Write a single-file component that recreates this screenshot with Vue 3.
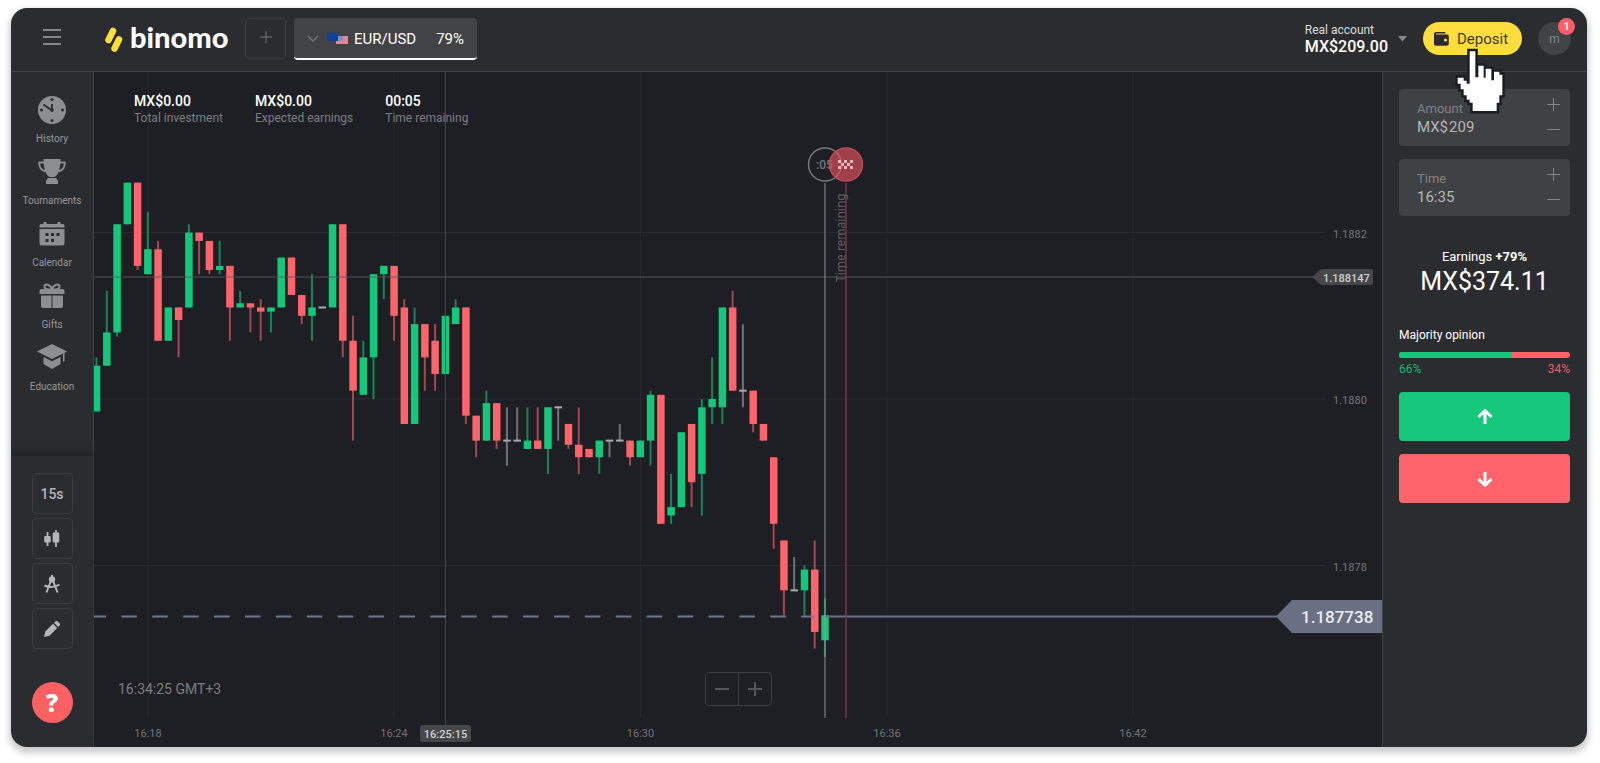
<template>
  <div class="window">
    <header class="topbar">
      <div class="topbar-left">
        <button type="button" class="burger" aria-label="Menu">
          <span></span><span></span><span></span>
        </button>
        <a href="#" class="logo">
          <svg width="18" height="26" viewBox="0 0 18 26" aria-hidden="true">
            <g stroke="#ffdd3c" stroke-width="6.500" stroke-linecap="round">
              <path d="M3.500 14 8 5M9.500 22.500 14 13.500" />
            </g>
          </svg>
          <span>binomo</span>
        </a>
        <button type="button" class="add-tab" aria-label="Add asset">
          <svg width="14" height="14" viewBox="0 0 14 14" aria-hidden="true">
            <path d="M7 1v12M1 7h12" stroke="#727376" />
          </svg>
        </button>
        <button type="button" class="asset-tab">
          <svg width="12" height="8" viewBox="0 0 12 8" aria-hidden="true">
            <path d="M1 1l5 5 5-5" fill="none" stroke="#77787b" stroke-width="1.3" />
          </svg>
          <svg class="flags" width="22" height="12" viewBox="0 0 22 12" aria-hidden="true">
            <rect x="9" y="3" width="12" height="8" fill="#e08a92" />
            <rect x="9" y="3" width="7" height="5" fill="#8090bd" />
            <rect width="11" height="8" fill="#10429a" />
          </svg>
          <span class="asset-name">EUR/USD</span>
          <span>79%</span>
        </button>
      </div>
      <div class="topbar-right">
        <button type="button" class="account">
          <span>
            <span class="account-type">Real account</span>
            <span class="account-balance">MX$209.00</span>
          </span>
          <svg width="9" height="6" viewBox="0 0 9 6" aria-hidden="true">
            <path d="M0 0h9L4.500 5.500z" fill="#87888b" />
          </svg>
        </button>
        <div class="deposit-wrap">
          <button type="button" class="deposit">
            <svg width="15" height="14" viewBox="0 0 15 14" aria-hidden="true">
              <path
                d="M2 0h8.500a1 1 0 0 1 1 1v.6H2.200v.9H13a1.800 1.800 0 0 1 1.800 1.800V12a1.800 1.800 0 0 1-1.800 1.800H2A2 2 0 0 1 0 11.800V2a2 2 0 0 1 2-2z"
                fill="#2c2c2e"
              />
              <circle cx="11.500" cy="8" r="1.600" fill="#ffdd3c" />
            </svg>
            Deposit
          </button>
          <svg class="pointer" width="52" height="68" viewBox="102 95 156 204" aria-hidden="true">
            <path
              d="M149 108H166V186H175V151H191V187H197V160H214V195H222V169H238V178H247V240H238V262H230V287H158V262H149V253H140V240H131V222H122V205H113V187H131V196H140V205H149Z"
              fill="#fff"
              stroke="#1b1d24"
              stroke-width="15"
              paint-order="stroke"
            />
          </svg>
        </div>
        <button type="button" class="avatar">m<span class="badge">1</span></button>
      </div>
    </header>

    <div class="main">
      <aside class="sidebar">
        <nav class="menu">
          <a v-for="item in menu" :key="item.label" href="#" class="menu-item">
            <svg width="32" height="28" viewBox="0 0 32 28" aria-hidden="true">
              <g v-if="item.icon === 'clock'">
                <circle cx="16" cy="14" r="14" fill="#8d8e91" />
                <path d="M16 8v6.500L7.500 8.500" fill="none" stroke="#2b2c30" stroke-width="1.800" />
                <g fill="#2b2c30">
                  <circle cx="16" cy="14" r="1.800" />
                  <circle cx="16" cy="3.500" r="1.500" />
                  <circle cx="16" cy="24.500" r="1.500" />
                  <circle cx="5.500" cy="14" r="1.500" />
                  <circle cx="26.500" cy="14" r="1.500" />
                </g>
              </g>
              <g v-else-if="item.icon === 'cup'">
                <path d="M7.500 1h17c0 9-2 16-6 18h-5c-4-2-6-9-6-18z" fill="#8d8e91" />
                <path
                  d="M8 4.500H3.200c0 5 2 8 6.300 9M24 4.500h4.800c0 5-2 8-6.300 9"
                  fill="none"
                  stroke="#8d8e91"
                  stroke-width="1.800"
                />
                <path d="M12 20h8l2 3v3H10v-3z" fill="#8d8e91" />
              </g>
              <g v-else-if="item.icon === 'calendar'" fill="#8d8e91">
                <path d="M5 4h2.500V2h3v2h11V2h3v2H27q1.500 0 1.500 2v1.500h-25V6Q3.500 4 5 4z" />
                <path
                  fill-rule="evenodd"
                  d="M3.500 9h25v14.500q0 2-2 2h-21q-2 0-2-2zM15 13v3h3v-3zM20.500 13v3h3v-3zM9.500 13v3h3v-3zM9.500 19v3h3v-3zM15 19v3h3v-3z"
                />
              </g>
              <g v-else-if="item.icon === 'gift'" fill="#8d8e91">
                <path d="M3.500 9q0-2 2-2h21q2 0 2 2v3h-25zM5 13.500h10.500V26H7q-2 0-2-2zM16.500 13.500H27V24q0 2-2 2h-8.500z" />
                <path
                  d="M16 7.500C9 7.500 8 6 8.500 4s5.500-2.500 7.500 3.500c2-6 7-5.500 7.500-3.500s-.5 3.500-7.500 3.500z"
                  fill="none"
                  stroke="#8d8e91"
                  stroke-width="2"
                />
              </g>
              <g v-else fill="#8d8e91">
                <path d="M16 0l15 7.500L16 15 1 7.500z" />
                <path d="M7.500 13l8.500 4.200 8.500-4.200v7L16 25l-8.500-5z" />
                <path d="M27 9l1.500-1v9.500H27z" />
              </g>
            </svg>
            <span>{{ item.label }}</span>
          </a>
        </nav>
        <div class="tools">
          <button type="button" class="tool">15s</button>
          <button type="button" class="tool" aria-label="Chart type">
            <svg width="18" height="18" viewBox="0 0 18 18" aria-hidden="true">
              <path d="M4.500 2v14M13 0v17" stroke="#b4b5b7" stroke-width="1.800" />
              <rect x="1.200" y="6" width="6.500" height="6.500" rx="1" fill="#b4b5b7" />
              <rect x="9.700" y="2.500" width="6.500" height="10" rx="1" fill="#b4b5b7" />
            </svg>
          </button>
          <button type="button" class="tool" aria-label="Indicators">
            <svg width="18" height="18" viewBox="0 0 18 18" aria-hidden="true">
              <circle cx="9" cy="4.500" r="3.200" fill="#b4b5b7" />
              <path
                d="M9 0v3M7.500 7L5.500 12 3.500 17.500M10.500 7l2 5 2 5.500M1.500 10.500q7.500 3.500 15-1"
                fill="none"
                stroke="#b4b5b7"
                stroke-width="2"
              />
            </svg>
          </button>
          <button type="button" class="tool" aria-label="Drawing">
            <svg width="18" height="18" viewBox="0 0 18 18" aria-hidden="true">
              <path d="M1 17l1.300-5.500 7.700-7.700 4.200 4.200-7.700 7.700z" fill="#b4b5b7" />
              <path d="M11 2.800l1.600-1.500q1-.8 2 0l2.100 2.100q.8 1 0 2L15.200 7z" fill="#b4b5b7" />
            </svg>
          </button>
          <button type="button" class="help" aria-label="Help">?</button>
        </div>
      </aside>

      <section class="chart">
        <svg class="plot" viewBox="0 0 1288 675" preserveAspectRatio="xMaxYMid meet">
          <g stroke="#292a2d">
            <path v-for="t in timeLabels" :key="t.text" :d="`M${t.x} 0V646`" />
            <path v-for="p in priceLabels" :key="p.text" :d="`M0 ${p.y}H1232`" />
          </g>
          <g v-for="(c, i) in candles" :key="i" :fill="c.color">
            <rect :x="c.x - 1" :y="c.high" width="2" :height="c.low - c.high" opacity="0.6" />
            <rect :x="c.x - 3.700" :y="c.top" width="7.500" :height="c.height" />
          </g>

          <path d="M0 205H1222" stroke="#55575b" stroke-opacity="0.6" stroke-width="1.500" />
          <path d="M351.500 0V654" stroke="#47484b" />

          <path d="M-3.500 544.500H720" stroke="#6f7690" stroke-width="2" stroke-dasharray="15.500 15.400" />
          <path d="M731 544.500H1184" stroke="#6a708a" stroke-width="2" />
          <path d="M1182 544.500L1198 528H1288V561H1198z" fill="#697083" />
          <text x="1207" y="551" class="price-now">1.187738</text>

          <path d="M731 111V646" stroke="#9a9b9f" stroke-opacity="0.45" stroke-width="2" />
          <path d="M752 111V646" stroke="#753b43" stroke-width="1.500" />
          <text class="rotated" transform="translate(751 210) rotate(-90)">Time remaining</text>
          <circle cx="731" cy="92.500" r="16.500" fill="none" stroke="#77787b" stroke-width="1.500" />
          <text x="722" y="97" class="countdown">:05</text>
          <circle
            cx="752"
            cy="92.500"
            r="16.500"
            fill="#e5525d"
            fill-opacity="0.65"
            stroke="#bd4c56"
            stroke-width="1.500"
          />
          <g fill="#e6b4b8">
            <rect v-for="(s, i) in flagSquares" :key="i" :x="744 + s[0] * 3" :y="88 + s[1] * 3" width="3" height="3" />
          </g>

          <g class="axis">
            <text v-for="t in timeLabels" :key="t.text" :x="t.x" y="665" text-anchor="middle">
              {{ t.text }}
            </text>
            <text v-for="p in priceLabels" :key="p.text" x="1239" :y="p.y + 5">{{ p.text }}</text>
          </g>
          <rect x="326" y="653" width="51" height="17" rx="3" fill="#46474a" />
          <text x="351.500" y="666" text-anchor="middle" class="marker">16:25:15</text>
          <path d="M1218 205L1227 197H1277q2 0 2 2V211q0 2-2 2H1227z" fill="#46474a" />
          <text x="1229" y="210" class="marker">1.188147</text>
        </svg>

        <div class="overlay">
          <dl class="stats">
            <div v-for="s in stats" :key="s.label">
              <dd>{{ s.value }}</dd>
              <dt>{{ s.label }}</dt>
            </div>
          </dl>
          <div class="chart-footer">
            <time class="clock">16:34:25 GMT+3</time>
            <div class="zoom">
              <button type="button" aria-label="Zoom out">
                <svg width="14" height="14" viewBox="0 0 14 14" aria-hidden="true">
                  <path d="M0 7h14" stroke="#55565a" stroke-width="2" />
                </svg>
              </button>
              <button type="button" aria-label="Zoom in">
                <svg width="14" height="14" viewBox="0 0 14 14" aria-hidden="true">
                  <path d="M0 7h14M7 0v14" stroke="#55565a" stroke-width="2" />
                </svg>
              </button>
            </div>
          </div>
        </div>
      </section>

      <aside class="deal">
        <div class="field">
          <div class="field-text">
            <label for="amount">Amount</label>
            <div class="field-value">MX$<input id="amount" v-model="amount" type="text" /></div>
          </div>
          <div class="stepper">
            <button type="button" class="plus" aria-label="Increase amount"></button>
            <button type="button" aria-label="Decrease amount"></button>
          </div>
        </div>
        <div class="field">
          <div class="field-text">
            <label for="time">Time</label>
            <div class="field-value"><input id="time" v-model="time" type="text" /></div>
          </div>
          <div class="stepper">
            <button type="button" class="plus" aria-label="Later"></button>
            <button type="button" aria-label="Earlier"></button>
          </div>
        </div>
        <div class="earnings">
          <div>Earnings <b>+79%</b></div>
          <div class="earnings-sum">MX$374.11</div>
        </div>
        <div class="majority">
          <div class="majority-title">Majority opinion</div>
          <div class="majority-bar"><div :style="{ width: majority + '%' }"></div></div>
          <div class="majority-values">
            <span class="up">{{ majority }}%</span>
            <span class="down">{{ 100 - majority }}%</span>
          </div>
        </div>
        <button type="button" class="trade trade-up" aria-label="Up">
          <svg width="16" height="16" viewBox="0 0 16 16" aria-hidden="true">
            <path d="M8 15V2M1.500 8L8 1.500 14.500 8" />
          </svg>
        </button>
        <button type="button" class="trade trade-down" aria-label="Down">
          <svg width="16" height="16" viewBox="0 0 16 16" aria-hidden="true">
            <path d="M8 1v13M1.500 8L8 14.500 14.500 8" />
          </svg>
        </button>
      </aside>
    </div>
  </div>
</template>

<script setup>
import { ref, computed } from "vue";

const amount = ref("209");
const time = ref("16:35");
const majority = ref(66);

const menu = [
  { label: "History", icon: "clock" },
  { label: "Tournaments", icon: "cup" },
  { label: "Calendar", icon: "calendar" },
  { label: "Gifts", icon: "gift" },
  { label: "Education", icon: "cap" },
];

const stats = [
  { value: "MX$0.00", label: "Total investment" },
  { value: "MX$0.00", label: "Expected earnings" },
  { value: "00:05", label: "Time remaining" },
];

const timeLabels = [
  { text: "16:18", x: 54 },
  { text: "16:24", x: 300 },
  { text: "16:30", x: 546.5 },
  { text: "16:36", x: 793 },
  { text: "16:42", x: 1039 },
];

const priceLabels = [
  { text: "1.1882", y: 160.5 },
  { text: "1.1880", y: 327 },
  { text: "1.1878", y: 493.5 },
];

const flagSquares = [
  [0, 0], [2, 0], [4, 0], [1, 1], [3, 1], [0, 2], [2, 2], [4, 2],
];

// open, high, low, close in steps of 0.000005 counted from 1.1880
const quotes = [
  [-3, 10, -3, 8], [8, 26, 8, 16], [16, 42, 15, 42], [42, 52, 42, 52],
  [52, 52, 31, 32], [30, 45, 30, 36], [36, 38, 14, 14], [14, 22, 14, 22],
  [22, 22, 10, 19], [22, 42, 22, 40], [40, 40, 30, 38], [38, 38, 30, 31],
  [31, 38, 30, 32], [32, 32, 14, 22], [22, 26, 22, 23], [23, 23, 16, 22],
  [22, 24, 14, 21], [21, 22, 16, 22], [22, 34, 22, 34], [34, 34, 25, 25],
  [25, 25, 18, 20], [20, 30, 14, 22], [22, 22, 22, 22], [22, 42, 22, 42],
  [42, 42, 10, 14], [14, 20, -10, 2], [1, 14, 1, 10], [10, 30, 0, 30],
  [30, 32, 24, 32], [32, 32, 14, 20], [22, 24, -6, -6], [-6, 22, -6, 18],
  [18, 18, 2, 10], [14, 18, 2, 6], [6, 20, 6, 20], [18, 24, 18, 22],
  [22, 22, -6, -4], [-4, -4, -14, -10], [-10, 2, -10, -1], [-1, -1, -12, -10],
  [-10, -2, -16, -10], [-10, -2, -10, -10], [-12, -2, -12, -10], [-10, -2, -12, -12],
  [-12, -2, -18, -2], [-2, -2, -10, -2], [-6, -6, -12, -11], [-11, -2, -18, -14],
  [-12, -12, -14, -14], [-14, -10, -18, -10], [-10, -10, -14, -10], [-10, -6, -10, -10],
  [-10, -10, -16, -14], [-14, -10, -14, -10], [-10, 2, -16, 1], [1, 1, -30, -30],
  [-28, -18, -30, -26], [-26, -8, -26, -8], [-6, -6, -26, -20], [-18, 0, -28, -2],
  [-2, 10, -6, 0], [-2, 22, -6, 22], [22, 26, 2, 2], [2, 18, -2, 2],
  [2, 2, -8, -6], [-6, -6, -10, -10], [-14, -14, -36, -30], [-34, -34, -52, -46],
  [-46, -38, -46, -46], [-46, -40, -52, -41], [-41, -34, -60, -56], [-58, -48, -62, -52],
];

const toY = (value) => 327 - value * 4.16;

const candles = computed(() =>
  quotes.map(([open, high, low, close], i) => {
    const flat = open === close;
    const top = toY(Math.max(open, close));
    return {
      x: 2.5 + i * 10.26,
      high: toY(high),
      low: toY(low),
      top: flat ? top - 1 : top,
      height: flat ? 2 : Math.abs(open - close) * 4.16,
      color: flat ? "#a9aaad" : close > open ? "#15c77b" : "#ff636c",
    };
  })
);
</script>

<style>
body {
  background-color: #fff;
}
</style>

<style scoped>
* {
  box-sizing: border-box;
}
.window {
  display: flex;
  flex-direction: column;
  min-height: calc(100vh - 24px);
  margin: 8px 13px 16px 11px;
  border-radius: 16px;
  overflow: hidden;
  background-color: #2b2c30;
  box-shadow: 0 4px 6px 2px rgba(0, 0, 0, 0.2);
  color: #fff;
  font-family: Roboto, "Liberation Sans", sans-serif;
  font-size: 13px;
  line-height: 16px;
}
button {
  display: flex;
  align-items: center;
  justify-content: center;
  padding: 0;
  border: 0;
  background: none;
  color: inherit;
  font: inherit;
  cursor: pointer;
}
a {
  color: inherit;
  text-decoration: none;
}

/* top bar */
.topbar {
  display: flex;
  justify-content: space-between;
  height: 64px;
  padding-bottom: 2px;
  border-bottom: 1px solid #424347;
}
.topbar-left,
.topbar-right {
  display: flex;
  align-items: center;
}
.topbar-left {
  padding-left: 32px;
}
.topbar-right {
  padding-right: 16px;
}
.burger {
  flex-direction: column;
  gap: 5px;
  padding-bottom: 4px;
}
.burger span {
  width: 18px;
  height: 2px;
  background-color: #85868a;
}
.logo {
  display: flex;
  align-items: center;
  gap: 7px;
  width: 127px;
  margin: 0 13px 0 44px;
  font-family: Lato, "Open Sans", sans-serif;
  font-size: 29px;
  font-weight: 900;
  line-height: 32px;
}
.logo svg {
  flex: none;
}
.logo span {
  padding-bottom: 4px;
}
.add-tab {
  width: 41px;
  height: 41px;
  margin-right: 8px;
  border: 1px solid #3b3c40;
  border-radius: 4px;
}
.add-tab svg {
  margin-bottom: 4px;
}
.asset-tab {
  justify-content: flex-start;
  width: 183px;
  height: 42px;
  padding: 3px 13px 0;
  border-bottom: 2px solid #fff;
  border-radius: 4px;
  background-color: #424346;
  font-size: 15px;
}
.flags {
  margin: 0 5px 0 8px;
}
.asset-name {
  flex: 1;
  text-align: left;
}
.account {
  gap: 10px;
  margin-right: 16px;
  text-align: left;
}
.account > span > span {
  display: block;
}
.account-type {
  color: #dcdcdd;
  font-size: 12px;
}
.account-balance {
  font-size: 16px;
  font-weight: 500;
  line-height: 18px;
}
.deposit-wrap {
  position: relative;
  margin-right: 16px;
}
.deposit {
  justify-content: flex-start;
  gap: 8px;
  width: 99px;
  height: 33px;
  padding-left: 11px;
  border-radius: 17px;
  background-color: #ffdd3c;
  color: #3d3a2c;
  font-size: 15px;
}
.pointer {
  position: absolute;
  top: 25px;
  left: 31px;
  z-index: 2;
}
.avatar {
  position: relative;
  width: 33px;
  height: 33px;
  border-radius: 50%;
  background-color: #424347;
  color: #86878a;
  font-size: 12px;
}
.badge {
  position: absolute;
  top: -4px;
  right: -4px;
  width: 17px;
  height: 17px;
  border-radius: 50%;
  background-color: #ff5f68;
  color: #fff;
  font-size: 10px;
  font-weight: 700;
  line-height: 17px;
}

/* body */
.main {
  display: grid;
  flex: 1;
  grid-template-columns: 83px minmax(0, 1fr) 205px;
}
.sidebar {
  display: flex;
  flex-direction: column;
  border-right: 1px solid #424347;
}
.menu {
  display: flex;
  flex: 1;
  flex-direction: column;
  gap: 11px;
  padding-top: 24px;
}
.menu-item {
  display: flex;
  flex-direction: column;
  align-items: center;
  gap: 7px;
  color: #97989b;
  font-size: 10px;
}
.tools {
  display: flex;
  flex-direction: column;
  align-items: center;
  gap: 4px;
  padding: 17px 0 24px;
  box-shadow: 0 -4px 8px #202125;
}
.tool {
  width: 41px;
  height: 41px;
  border: 1px solid #3b3c40;
  border-radius: 4px;
  color: #b4b5b7;
  font-size: 14px;
  font-weight: 500;
}
.help {
  width: 41px;
  height: 41px;
  margin-top: 29px;
  border-radius: 50%;
  background-color: #fb6163;
  font-family: "Open Sans", sans-serif;
  font-size: 24px;
  font-weight: 800;
}

/* chart */
.chart {
  display: grid;
  background-color: #1e1f24;
}
.plot,
.overlay {
  grid-area: 1 / 1;
  width: 100%;
  height: 100%;
  min-height: 0;
}
.plot text {
  font-family: Roboto, "Liberation Sans", sans-serif;
}
.axis {
  fill: #737477;
  font-size: 11px;
}
.plot .marker {
  fill: #d2d2d3;
  font-size: 11px;
  font-weight: 500;
}
.plot .price-now {
  fill: #ececee;
  font-size: 17px;
  font-weight: 500;
}
.plot .rotated {
  fill: #5e5f62;
  font-family: "Noto Sans", sans-serif;
  font-size: 12px;
}
.plot .countdown {
  fill: #77787b;
  font-size: 12px;
  font-weight: 500;
}
.overlay {
  display: flex;
  flex-direction: column;
  justify-content: space-between;
  padding: 21px 24px 41px;
}
.stats {
  display: flex;
  gap: 32px;
  margin: 0;
  padding-left: 16px;
}
.stats dd {
  margin: 0;
  font-size: 14px;
  font-weight: 500;
}
.stats dt {
  color: #7c7d80;
  font-size: 12px;
  line-height: 18px;
}
.chart-footer {
  display: grid;
  grid-template-columns: 1fr auto 1fr;
  align-items: center;
}
.clock {
  color: #7c7d80;
  font-size: 14px;
}
.zoom {
  display: flex;
  height: 34px;
  border: 1px solid #3c3d40;
  border-radius: 4px;
}
.zoom button {
  width: 32px;
}
.zoom button + button {
  width: 33px;
  border-left: 1px solid #3c3d40;
}

/* deal panel */
.deal {
  display: flex;
  flex-direction: column;
  gap: 13px;
  padding: 17px 17px 17px 16px;
  border-left: 1px solid #424347;
}
.field {
  display: flex;
  justify-content: space-between;
  height: 57px;
  padding: 9px 10px 10px 18px;
  border-radius: 4px;
  background-color: #404144;
}
.field-text {
  display: flex;
  flex-direction: column;
  gap: 2px;
  padding-top: 3px;
}
.field label {
  color: #808184;
}
.field-value {
  display: flex;
  gap: 1px;
  color: #b5b6b8;
  font-size: 15px;
}
.field input {
  width: 64px;
  padding: 0;
  border: 0;
  outline: 0;
  background: none;
  color: inherit;
  font: inherit;
}
.stepper {
  display: flex;
  flex-direction: column;
  justify-content: space-between;
}
.stepper button {
  width: 13px;
  height: 13px;
  background: linear-gradient(#85868a, #85868a) center / 13px 1px no-repeat;
}
.stepper .plus {
  background:
    linear-gradient(#85868a, #85868a) center / 13px 1px no-repeat,
    linear-gradient(#85868a, #85868a) center / 1px 13px no-repeat;
}
.earnings {
  margin-top: 20px;
  text-align: center;
}
.earnings b {
  font-weight: 700;
}
.earnings-sum {
  font-size: 25px;
  line-height: 34px;
}
.majority {
  margin: 15px 0 2px;
}
.majority-title {
  font-size: 12px;
}
.majority-bar {
  height: 6px;
  margin: 9px 0 3px;
  border-radius: 3px;
  overflow: hidden;
  background-color: #ff636c;
}
.majority-bar div {
  height: 100%;
  background-color: #15c77b;
}
.majority-values {
  display: flex;
  justify-content: space-between;
  font-size: 12px;
}
.up {
  color: #15b872;
}
.down {
  color: #ee5d66;
}
.trade {
  height: 49px;
  border-radius: 4px;
}
.trade path {
  fill: none;
  stroke: #fff;
  stroke-width: 3;
}
.trade-up {
  background-color: #15c77b;
}
.trade-down {
  background-color: #ff636c;
}
</style>
